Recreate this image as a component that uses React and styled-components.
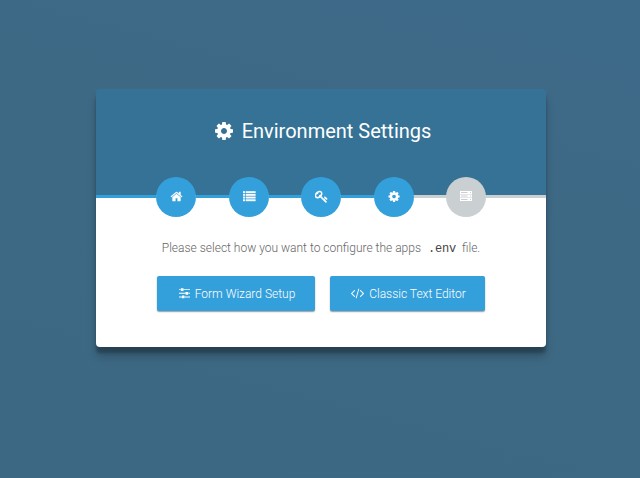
import React from "react";
import styled, { createGlobalStyle } from "styled-components";

const GlobalStyle = createGlobalStyle`
  * { box-sizing: border-box; }
  body {
    margin: 0;
    font-family: Roboto, "Liberation Sans", sans-serif;
    font-weight: 300;
  }
`;

const Page = styled.main`
  height: 478px;
  padding-top: 89px;
  overflow: hidden;
  background: linear-gradient(195deg, #3e6a8a 0%, #3e6984 45%, #3d6883 100%);
`;

const Card = styled.section`
  width: 450px;
  height: 258px;
  margin-left: 96px;
  display: flex;
  flex-direction: column;
  background: linear-gradient(#357295 106px, #fff 106px);
  border-radius: 4px;
  box-shadow: 0 10px 10px rgba(0, 0, 0, 0.19), 0 6px 3px rgba(0, 0, 0, 0.23);
`;

const Header = styled.header`
  height: 106px;
  padding: 30px 0 0 4px;
`;

const Title = styled.h1`
  margin: 0;
  display: flex;
  justify-content: center;
  align-items: center;
  gap: 9px;
  height: 24px;
  font-size: 20px;
  font-weight: 400;
  line-height: 24px;
  color: #fff;
  white-space: nowrap;
`;

const Steps = styled.nav`
  display: flex;
  align-items: flex-start;
  height: 3px;
`;

const Divider = styled.span`
  flex: 0 0 ${(p) => p.$width}px;
  height: 3px;
  background: ${(p) => (p.$active ? "#34a0db" : "#cacfd2")};
`;

const Step = styled.span`
  flex: 0 0 40px;
  height: 40px;
  margin-top: -18px;
  padding-bottom: 1px;
  display: flex;
  justify-content: center;
  align-items: center;
  border-radius: 50%;
  color: #fff;
  background: ${(p) => (p.$active ? "#34a0db" : "#cacfd2")};
`;

const Body = styled.div`
  display: flex;
  flex-direction: column;
  align-items: center;
  padding-top: 40px;
`;

const Message = styled.p`
  margin: 0;
  height: 20px;
  font-size: 12px;
  line-height: 20px;
  color: #666;
  white-space: nowrap;
`;

const Code = styled.code`
  margin: 0 6px 0 7px;
  font-family: "Liberation Mono", monospace;
  font-size: 12px;
  letter-spacing: -0.2px;
  font-weight: 400;
  color: #444;
`;

const Buttons = styled.div`
  display: flex;
  gap: 15px;
  margin-top: 18px;
`;

const Button = styled.button`
  width: ${(p) => p.$width}px;
  height: 35px;
  padding: 0 0 0 2px;
  display: flex;
  justify-content: center;
  align-items: center;
  gap: 5px;
  border: 0;
  border-radius: 2px;
  background: #34a0db;
  box-shadow: 0 1px 2px rgba(0, 0, 0, 0.2), 0 1px 1px rgba(0, 0, 0, 0.24);
  color: #fff;
  font: 300 12px/20px Roboto, "Liberation Sans", sans-serif;
  white-space: nowrap;
`;

const Svg = styled.svg`
  flex: none;
  display: block;
  width: ${(p) => p.$w}px;
  height: ${(p) => p.$h}px;
  fill: currentColor;
`;

const paths = {
  cog: "M1152 896q0-106-75-181t-181-75-181 75-75 181 75 181 181 75 181-75 75-181zm512-109v222q0 12-8 23t-20 13l-185 28q-19 54-39 91 35 50 107 138 10 12 10 25t-9 23q-27 37-99 108t-94 71q-12 0-26-9l-138-108q-44 23-91 38-16 136-29 186-7 28-36 28h-222q-14 0-24.5-8.5t-11.5-21.5l-28-184q-49-16-90-37l-141 107q-10 9-25 9-14 0-25-11-126-114-165-168-7-10-7-23 0-12 8-23 15-21 51-66.5t54-70.5q-27-50-41-99l-183-27q-13-2-21-12.5t-8-23.5v-222q0-12 8-23t19-13l186-28q14-46 39-92-40-57-107-138-10-12-10-24 0-10 9-23 26-36 98.5-107.5t94.5-71.5q13 0 26 10l138 107q44-23 91-38 16-136 29-186 7-28 36-28h222q14 0 24.5 8.5t11.5 21.5l28 184q49 16 90 37l142-107q9-9 24-9 13 0 25 10 129 119 165 170 7 8 7 22 0 12-8 23-15 21-51 66.5t-54 70.5q26 50 41 98l183 28q13 2 21 12.5t8 23.5z",
  home: "M1472 992v480q0 26-19 45t-45 19h-384v-384h-256v384h-384q-26 0-45-19t-19-45v-480q0-1 .5-3t.5-3l575-474 575 474q1 2 1 6zm223-69l-62 74q-8 9-21 11h-3q-13 0-21-7l-692-577-692 577q-12 8-24 7-13-2-21-11l-62-74q-8-10-7-23.5t11-21.5l719-599q32-26 76-26t76 26l244 204v-195q0-14 9-23t23-9h192q14 0 23 9t9 23v408l219 182q10 8 11 21.5t-7 23.5z",
  key: "M832 512q0-80-56-136t-136-56-136 56-56 136q0 42 19 83-41-19-83-19-80 0-136 56t-56 136 56 136 136 56 136-56 56-136q0-42-19-83 41 19 83 19 80 0 136-56t56-136zm851 704q0 17-49 66t-66 49q-9 0-28.5-16t-36.5-33-38.5-40-24.5-26l-96 96 220 220q28 28 28 68 0 42-39 81t-81 39q-40 0-68-28l-671-671q-176 131-365 131-163 0-265.5-102.5t-102.5-265.5q0-160 95-313t248-248 313-95q163 0 265.5 102.5t102.5 265.5q0 189-131 365l355 355 96-96q-3-3-26-24.5t-40-38.5-33-36.5-16-28.5q0-17 49-66t66-49q13 0 23 10 6 6 46 44.5t82 79.5 86.5 86 73 78 28.5 41z",
  sliders: "M352 1312v128h-352v-128h352zm352-128q26 0 45 19t19 45v256q0 26-19 45t-45 19h-256q-26 0-45-19t-19-45v-256q0-26 19-45t45-19h256zm160-384v128h-864v-128h864zm-640-512v128h-224v-128h224zm1312 1024v128h-736v-128h736zm-960-1152q26 0 45 19t19 45v256q0 26-19 45t-45 19h-256q-26 0-45-19t-19-45v-256q0-26 19-45t45-19h256zm640 512q26 0 45 19t19 45v256q0 26-19 45t-45 19h-256q-26 0-45-19t-19-45v-256q0-26 19-45t45-19h256zm320 128v128h-224v-128h224zm0-512v128h-864v-128h864z",
  code: "M553 1399l-50 50q-10 10-23 10t-23-10l-466-466q-10-10-10-23t10-23l466-466q10-10 23-10t23 10l50 50q10 10 10 23t-10 23l-393 393 393 393q10 10 10 23t-10 23zm591-1067l-373 1291q-4 13-15.5 19.5t-23.5 2.5l-62-17q-13-4-19.5-15.5t-2.5-24.5l373-1291q4-13 15.5-19.5t23.5-2.5l62 17q13 4 19.5 15.5t2.5 24.5zm657 651l-466 466q-10 10-23 10t-23-10l-50-50q-10-10-10-23t10-23l393-393-393-393q-10-10-10-23t10-23l50-50q10-10 23-10t23 10l466 466q10 10 10 23t-10 23z",
};

const Glyph = ({ name, w, h, box = "0 0 1792 1792" }) => (
  <Svg $w={w} $h={h} viewBox={box} aria-hidden="true">
    <path d={paths[name]} />
  </Svg>
);

const ListIcon = () => (
  <Svg $w={13} $h={13} viewBox="0 0 13 13" aria-hidden="true">
    {[1.2, 3.9, 6.6, 9.3].map((y) => (
      <g key={y}>
        <rect x="0" y={y} width="2" height="1.9" />
        <rect x="2.7" y={y} width="9.9" height="1.9" />
      </g>
    ))}
  </Svg>
);

const ServerIcon = () => (
  <Svg $w={12} $h={13} viewBox="0 0 12 13" aria-hidden="true">
    {[1, 4.5, 8].map((y) => (
      <path
        key={y}
        fillRule="evenodd"
        d={`M0 ${y}h12v3H0zM1 ${y + 1.1}v.8h6.5v-.8zM10 ${y + 1}v1h1v-1z`}
      />
    ))}
  </Svg>
);

export default function App() {
  return (
    <>
      <GlobalStyle />
      <Page>
        <Card>
          <Header>
            <Title>
              <Glyph name="cog" w={18} h={18} box="128 128 1536 1536" />
              Environment Settings
            </Title>
          </Header>
          <Steps>
            <Divider $width={60} $active />
            <Step $active><Glyph name="home" w={13} h={13} /></Step>
            <Divider $width={33} $active />
            <Step $active><ListIcon /></Step>
            <Divider $width={32} $active />
            <Step $active><Glyph name="key" w={13} h={13} box="40 40 1712 1712" /></Step>
            <Divider $width={33} $active />
            <Step $active><Glyph name="cog" w={13} h={13} box="64 0 1792 1792" /></Step>
            <Divider $width={32} />
            <Step><ServerIcon /></Step>
            <Divider $width={60} />
          </Steps>
          <Body>
            <Message>
              Please select how you want to configure the apps<Code>.env</Code>file.
            </Message>
            <Buttons>
              <Button $width={158}>
                <Glyph name="sliders" w={11} h={13} box="0 0 1536 1792" />
                Form Wizard Setup
              </Button>
              <Button $width={155}>
                <Glyph name="code" w={13} h={13} box="-20 64 1832 1792" />
                Classic Text Editor
              </Button>
            </Buttons>
          </Body>
        </Card>
      </Page>
    </>
  );
}
